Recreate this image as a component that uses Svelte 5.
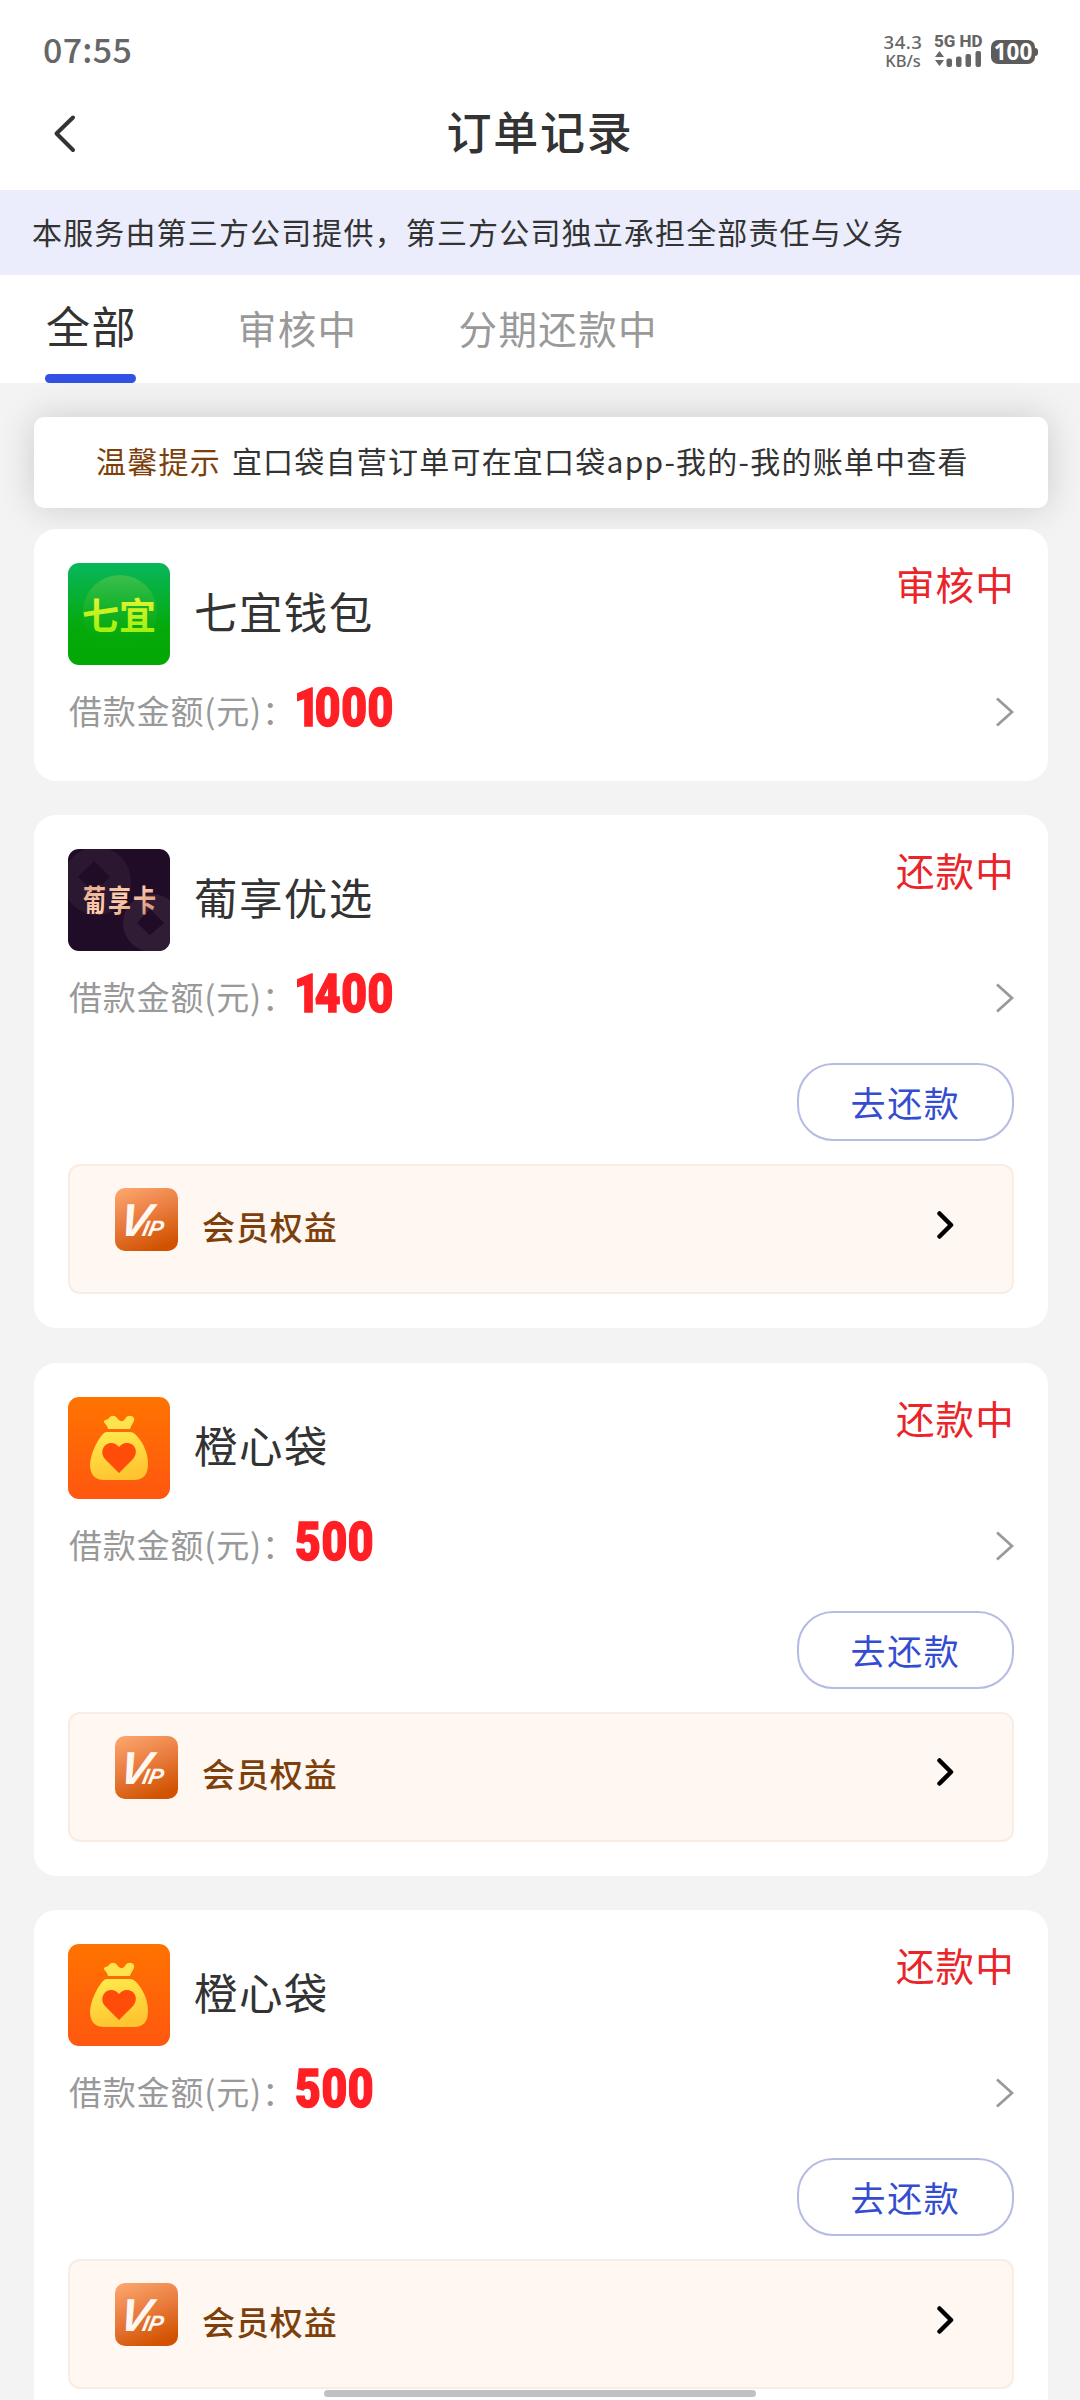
<script lang="ts">
type Order = {
	id: number;
	name: string;
	logo: "qiyi" | "puxiang" | "chengxin";
	amount: number;
	status: string;
	repayable: boolean;
};

const tabs = ["全部", "审核中", "分期还款中"];

const orders: Order[] = [
	{ id: 1, name: "七宜钱包", logo: "qiyi", amount: 1000, status: "审核中", repayable: false },
	{ id: 2, name: "葡享优选", logo: "puxiang", amount: 1400, status: "还款中", repayable: true },
	{ id: 3, name: "橙心袋", logo: "chengxin", amount: 500, status: "还款中", repayable: true },
	{ id: 4, name: "橙心袋", logo: "chengxin", amount: 500, status: "还款中", repayable: true },
];

let activeTab = $state("全部");
</script>

{#snippet logoIcon(logo: Order["logo"])}
	<svg class="logo" viewBox="0 0 102 102" aria-hidden="true">
		{#if logo === "qiyi"}
			<defs>
				<linearGradient id="qiyi-bg" x1="0" y1="0" x2="0" y2="1">
					<stop offset="0" stop-color="#08b75c" />
					<stop offset="0.65" stop-color="#05a90a" />
					<stop offset="1" stop-color="#04a804" />
				</linearGradient>
				<linearGradient id="qiyi-disc" x1="0" y1="0" x2="0" y2="1">
					<stop offset="0" stop-color="#3cbf4c" />
					<stop offset="1" stop-color="#05a90a" stop-opacity="0" />
				</linearGradient>
				<linearGradient id="qiyi-text" x1="0" y1="0" x2="0" y2="1">
					<stop offset="0" stop-color="#f6f43c" />
					<stop offset="1" stop-color="#92f000" />
				</linearGradient>
			</defs>
			<rect width="102" height="102" fill="url(#qiyi-bg)" />
			<circle cx="52" cy="49" r="37" fill="url(#qiyi-disc)" />
			<text x="14" y="67" font-size="37" font-weight="700" textLength="74" fill="url(#qiyi-text)">七宜</text>
		{:else if logo === "puxiang"}
			<defs>
				<linearGradient id="puxiang-text" x1="0" y1="0" x2="1" y2="1">
					<stop offset="0" stop-color="#dd9a7c" />
					<stop offset="0.5" stop-color="#ffd0b0" />
					<stop offset="1" stop-color="#c98263" />
				</linearGradient>
			</defs>
			<rect width="102" height="102" fill="#200c26" />
			<circle cx="29" cy="32" r="34" fill="#2b1730" />
			<path d="M26 12l16 16-16 16L10 28z" fill="#200c26" />
			<circle cx="84" cy="74" r="29" fill="#311c36" />
			<path d="M82 60l14 14-14 12-13-12z" fill="#200c26" />
			<text x="15" y="62" font-size="23" font-weight="700" textLength="73" transform="translate(0 -19) scale(1 1.3)" fill="url(#puxiang-text)">葡享卡</text>
		{:else}
			<defs>
				<linearGradient id="chengxin-bg" x1="0" y1="0" x2="0" y2="1">
					<stop offset="0" stop-color="#ff7300" />
					<stop offset="1" stop-color="#ff5710" />
				</linearGradient>
				<linearGradient id="chengxin-bag" x1="0" y1="0" x2="0.3" y2="1">
					<stop offset="0" stop-color="#ffec4e" />
					<stop offset="1" stop-color="#ffc531" />
				</linearGradient>
			</defs>
			<rect width="102" height="102" fill="url(#chengxin-bg)" />
			<path d="M40 32C39 27 35 26 36 24C38 22 40 23 41 21C43 18 47 18 49 21C52 25 55 25 57 22C59 18 64 18 66 21C67 25 64 26 62 32z" fill="#ffe34e" />
			<path d="M39 35H62C65 35 67 37 69 39C76 47 80 57 80 67C80 78 75 83 66 83H36C27 83 22 78 22 67C23 56 28 46 34 38C36 36 37 35 39 35z" fill="url(#chengxin-bag)" />
			<path d="M51 76L37 62C31 55 36 46 43 46C47 46 49 48 51 50C53 48 55 46 59 46C67 46 71 55 65 62z" fill="#ff4d09" />
		{/if}
	</svg>
{/snippet}

<div class="page">
	<div class="status-bar">
		<span class="clock">07:55</span>
		<div class="status-icons">
			<div class="speed"><span>34.3</span><span>KB/s</span></div>
			<div class="signal">
				<span>5G HD</span>
				<svg width="48" height="17" viewBox="0 0 48 17" fill="#666">
					<path d="M5.500 1l4.500 6h-9zM5.500 16l4.500-6h-9z" />
					<rect x="12.500" y="8.500" width="5.500" height="8.500" rx="2" />
					<rect x="22" y="6.500" width="5.500" height="10.500" rx="2" />
					<rect x="31.500" y="4" width="5.500" height="13" rx="2" />
					<rect x="41.500" y="1" width="5.500" height="16" rx="2" />
				</svg>
			</div>
			<div class="battery">100</div>
		</div>
	</div>

	<header class="nav">
		<button type="button" class="back" aria-label="返回">
			<svg width="24" height="40" viewBox="0 0 24 40" fill="none" stroke="#333" stroke-width="4" stroke-linecap="round" stroke-linejoin="round">
				<path d="M21 3.500L4.500 19.500L21 36" />
			</svg>
		</button>
		<h1>订单记录</h1>
	</header>

	<p class="disclaimer">本服务由第三方公司提供，第三方公司独立承担全部责任与义务</p>

	<nav class="tabs">
		{#each tabs as tab}
			<button type="button" class:active={activeTab === tab} onclick={() => (activeTab = tab)}>
				<span>{tab}</span>
			</button>
		{/each}
	</nav>

	<main>
		<div class="notice">
			<strong>温馨提示</strong>
			<span>宜口袋自营订单可在宜口袋app-我的-我的账单中查看</span>
		</div>

		{#each orders as order (order.id)}
			<article class="card">
				<div class="card-head">
					{@render logoIcon(order.logo)}
					<h2>{order.name}</h2>
					<span class="status">{order.status}</span>
				</div>
				<div class="loan">
					<span class="loan-label">借款金额(元)：</span>
					<span class="amount" class:leading-one={String(order.amount).startsWith("1")}>{order.amount}</span>
					<svg class="more" width="18" height="30" viewBox="0 0 18 30" fill="none" stroke="#999" stroke-width="2.800">
						<path d="M1 1.500L16 15L1 28.500" />
					</svg>
				</div>
				{#if order.repayable}
					<button type="button" class="repay">去还款</button>
					<div class="vip">
						<svg class="vip-icon" viewBox="0 0 63 63" aria-hidden="true">
							<defs>
								<linearGradient id="vip-bg" x1="0.2" y1="0" x2="0.6" y2="1">
									<stop offset="0" stop-color="#fba36b" />
									<stop offset="0.500" stop-color="#e87a3c" />
									<stop offset="1" stop-color="#d15200" />
								</linearGradient>
							</defs>
							<rect width="63" height="63" rx="10" fill="url(#vip-bg)" />
							<text class="vip-letters" x="2" y="48" transform="translate(10.200 0) skewX(-12)" fill="#fff8f2">V<tspan class="vip-small" dx="-6.500">IP</tspan></text>
						</svg>
						<span class="vip-label">会员权益</span>
						<svg class="vip-arrow" width="18" height="30" viewBox="0 0 18 30" fill="none" stroke="#000" stroke-width="4.500" stroke-linecap="round" stroke-linejoin="round">
							<path d="M3.500 3.500L15 15L3.500 26.500" />
						</svg>
					</div>
				{/if}
			</article>
		{/each}
	</main>

	<div class="home-indicator"></div>
</div>

<style>
	:global(body) {
		margin: 0;
		background: #f3f3f3;
	}

	.page {
		position: relative;
		width: 1080px;
		height: 2400px;
		overflow: hidden;
		background: #f3f3f3;
		color: #333;
		font-family: "Noto Sans CJK SC", "Noto Sans", sans-serif;
	}

	button {
		padding: 0;
		border: 0;
		background: none;
		font-family: inherit;
	}

	h1,
	h2,
	p {
		margin: 0;
	}

	.status-bar {
		display: flex;
		align-items: center;
		justify-content: space-between;
		box-sizing: border-box;
		height: 102px;
		padding: 0 42px 0 43px;
		background: #fff;
		color: #666;
	}

	.clock {
		margin-top: -5px;
		font-size: 34px;
		font-weight: 500;
		letter-spacing: 0.300px;
		line-height: 50px;
	}

	.status-icons {
		display: flex;
		align-items: center;
		height: 40px;
	}

	.speed {
		display: flex;
		flex-direction: column;
		align-items: center;
		width: 42px;
		margin-right: 10px;
		font-family: "Noto Sans", sans-serif;
		font-size: 18.500px;
		font-weight: 500;
		line-height: 19px;
		white-space: nowrap;
	}

	.speed span:first-child {
		letter-spacing: 0.500px;
	}

	.speed span:last-child {
		font-size: 16.500px;
	}

	.signal {
		display: flex;
		flex-direction: column;
		width: 48px;
		margin: -2px 9px 0 0;
		font-family: Roboto, sans-serif;
		font-size: 17px;
		font-weight: 800;
		line-height: 17px;
		white-space: nowrap;
	}

	.battery {
		position: relative;
		width: 44px;
		height: 24px;
		margin: 2px 3px 0 0;
		border-radius: 7px;
		background: #5c5c5c;
		color: #fff;
		font-family: "Noto Sans", sans-serif;
		font-size: 22.500px;
		font-weight: 700;
		line-height: 24px;
		text-align: center;
	}

	.battery::after {
		position: absolute;
		top: 8px;
		right: -3px;
		width: 3px;
		height: 8px;
		border-radius: 0 3px 3px 0;
		background: #5c5c5c;
		content: "";
	}

	.nav {
		display: grid;
		grid-template-columns: 120px 1fr 120px;
		align-items: center;
		height: 88px;
		background: #fff;
	}

	.back {
		display: flex;
		margin: -25px 0 0 52px;
	}

	h1 {
		margin-top: -30px;
		font-size: 45px;
		font-weight: 500;
		letter-spacing: 1.700px;
		line-height: 60px;
		text-align: center;
	}

	.disclaimer {
		height: 85px;
		padding-left: 32px;
		background: #ebedfc;
		color: #333;
		font-size: 30px;
		letter-spacing: 1.150px;
		line-height: 82px;
		white-space: nowrap;
	}

	.tabs {
		display: flex;
		gap: 100px;
		height: 108px;
		padding-left: 45px;
		background: #fff;
	}

	.tabs button {
		display: flex;
		flex-direction: column;
		height: 108px;
		color: #999;
		font-size: 38.500px;
		letter-spacing: 1.400px;
		line-height: 105px;
	}

	.tabs button:not(.active) span {
		padding-left: 1px;
	}

	.tabs button.active {
		color: #333;
		font-size: 44px;
	}

	.tabs button.active span {
		height: 99px;
		padding-left: 1px;
		line-height: 100px;
	}

	.tabs button.active::after {
		width: 91px;
		height: 9px;
		border-radius: 5px;
		background: #3350e4;
		content: "";
	}

	main {
		padding: 34px 32px 0 34px;
	}

	.notice {
		display: flex;
		align-items: center;
		gap: 11px;
		box-sizing: border-box;
		height: 91px;
		margin-bottom: 21px;
		padding: 0 0 5px 62px;
		border-radius: 10px;
		background: #fff;
		box-shadow: 0 0 36px rgb(0 0 0 / 16%);
		font-size: 30px;
		letter-spacing: 1.220px;
		white-space: nowrap;
	}

	.notice strong {
		color: #7d3f0b;
		font-weight: 400;
	}

	.card {
		position: relative;
		display: flex;
		flex-direction: column;
		margin-bottom: 34.400px;
		padding: 34px;
		border-radius: 22px;
		background: #fff;
	}

	.card-head {
		display: flex;
		align-items: center;
		height: 102px;
	}

	.logo {
		width: 102px;
		height: 102px;
		border-radius: 11px;
	}

	h2 {
		flex: 1;
		margin: -7px 0 0 24px;
		font-size: 43.500px;
		font-weight: 400;
		letter-spacing: 1.400px;
	}

	.status {
		align-self: flex-start;
		margin-right: -1px;
		color: #ea2428;
		font-size: 38.500px;
		letter-spacing: 1.200px;
		line-height: 41px;
	}

	.loan {
		display: flex;
		align-items: center;
		height: 70px;
		margin-top: 12px;
	}

	.loan-label {
		width: 226px;
		margin: -4px 0 0 1px;
		color: #999;
		font-size: 33px;
		letter-spacing: 0.800px;
		white-space: nowrap;
	}

	.amount {
		margin-top: -8px;
		color: #ff1f24;
		font-family: Roboto, sans-serif;
		font-size: 53px;
		font-weight: 900;
		letter-spacing: 0.700px;
		-webkit-text-stroke: 1.500px #ff1f24;
		transform: scaleX(0.84);
		transform-origin: left center;
	}

	.amount.leading-one {
		display: block;
		margin-left: -1px;
	}

	.amount.leading-one::first-letter {
		letter-spacing: -6px;
	}

	.more {
		margin-left: auto;
	}

	.repay {
		align-self: flex-end;
		box-sizing: border-box;
		width: 217px;
		height: 78px;
		margin-top: 30px;
		border: 2px solid #b5bbe3;
		border-radius: 36px;
		color: #344dd0;
		font-size: 35px;
		letter-spacing: 1.700px;
		line-height: 68px;
	}

	.vip {
		display: flex;
		align-items: center;
		box-sizing: border-box;
		height: 130px;
		margin-top: 23px;
		padding: 0 58px 0 45px;
		border: 2px solid #f9ece3;
		border-radius: 12px;
		background: #fef7f2;
	}

	.vip-icon {
		width: 63px;
		height: 63px;
		margin-top: -19px;
	}

	.vip-letters {
		font-family: "Liberation Sans", sans-serif;
		font-size: 46px;
		font-style: italic;
		font-weight: 700;
	}

	.vip-small {
		font-size: 22px;
	}

	.vip-label {
		flex: 1;
		margin: -7px 0 0 24px;
		color: #7d3f0b;
		font-size: 33px;
		font-weight: 500;
		letter-spacing: 0.900px;
	}

	.vip-arrow {
		margin-top: -9px;
	}

	.home-indicator {
		position: absolute;
		bottom: 3px;
		left: 324px;
		width: 432px;
		height: 7px;
		border-radius: 4px;
		background: #c1c1c1;
	}
</style>
